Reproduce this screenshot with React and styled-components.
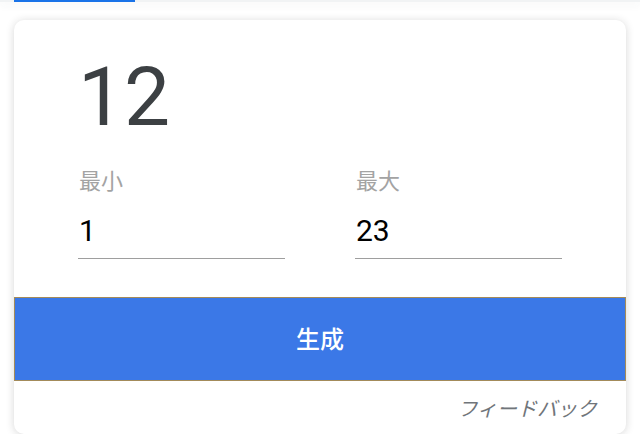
import React from 'react';
import styled, { createGlobalStyle } from 'styled-components';

const GlobalStyle = createGlobalStyle`
  html, body {
    margin: 0;
    padding: 0;
    background: #ffffff;
    font-family: Roboto, "Noto Sans CJK JP", "Noto Sans", sans-serif;
  }
`;

const TopBar = styled.div`
  height: 2px;
  background: #f1f3f4;
  box-shadow: 0 2px 8px rgba(60, 64, 67, 0.12);
  position: relative;
`;

const TabIndicator = styled.div`
  width: 121px;
  height: 2px;
  margin-left: 14px;
  background: #1a73e8;
`;

const Page = styled.div`
  padding: 18px 14px 0;
`;

const Card = styled.div`
  background: #fff;
  border-radius: 10px;
  box-shadow: 0 1px 8px rgba(32, 33, 36, 0.18);
  padding-top: 36px;
  overflow: hidden;
`;

const Result = styled.div`
  padding: 0 64px;
  font-size: 82px;
  line-height: 82px;
  color: #3c4043;
`;

const Fields = styled.div`
  display: grid;
  grid-template-columns: 207px 207px;
  column-gap: 70px;
  padding: 0 64px;
  margin-top: 32px;
`;

const Field = styled.label`
  display: flex;
  flex-direction: column;
`;

const FieldLabel = styled.span`
  font-size: 22px;
  line-height: 24px;
  color: #a3a3a3;
  padding-left: 1px;
`;

const FieldInput = styled.input`
  box-sizing: content-box;
  border: none;
  border-bottom: 1px solid #9e9e9e;
  outline: none;
  background: transparent;
  padding: 21px 0 13px 1px;
  margin: 0;
  font-family: Roboto, sans-serif;
  font-size: 30px;
  line-height: 30px;
  height: 30px;
  color: #000;
  width: 206px;
`;

const GenerateButton = styled.button`
  display: flex;
  align-items: center;
  justify-content: center;
  box-sizing: border-box;
  width: 100%;
  height: 84px;
  margin-top: 38px;
  padding: 0 0 4px;
  border: 1px solid #a38b5a;
  background: #3b78e7;
  color: #fff;
  font-family: Roboto, "Noto Sans CJK JP", sans-serif;
  font-size: 24px;
  font-weight: 500;
  cursor: pointer;
`;

const Footer = styled.div`
  height: 53px;
  display: flex;
  align-items: center;
  justify-content: flex-end;
  padding-right: 29px;
`;

const FeedbackLink = styled.a`
  font-size: 20px;
  font-style: italic;
  color: #70757a;
  text-decoration: none;
  cursor: pointer;
`;

const App = () => {
  const [min, setMin] = React.useState('1');
  const [max, setMax] = React.useState('23');
  const [value, setValue] = React.useState(12);

  const generate = () => {
    const lo = parseInt(min, 10) || 0;
    const hi = parseInt(max, 10) || 0;
    setValue(Math.floor(Math.random() * (hi - lo + 1)) + lo);
  };

  return (
    <>
      <GlobalStyle />
      <TopBar>
        <TabIndicator />
      </TopBar>
      <Page>
        <Card>
          <Result>{value}</Result>
          <Fields>
            <Field>
              <FieldLabel>最小</FieldLabel>
              <FieldInput value={min} onChange={(e) => setMin(e.target.value)} />
            </Field>
            <Field>
              <FieldLabel>最大</FieldLabel>
              <FieldInput value={max} onChange={(e) => setMax(e.target.value)} />
            </Field>
          </Fields>
          <GenerateButton onClick={generate}>生成</GenerateButton>
          <Footer>
            <FeedbackLink>フィードバック</FeedbackLink>
          </Footer>
        </Card>
      </Page>
    </>
  );
};

export default App;
